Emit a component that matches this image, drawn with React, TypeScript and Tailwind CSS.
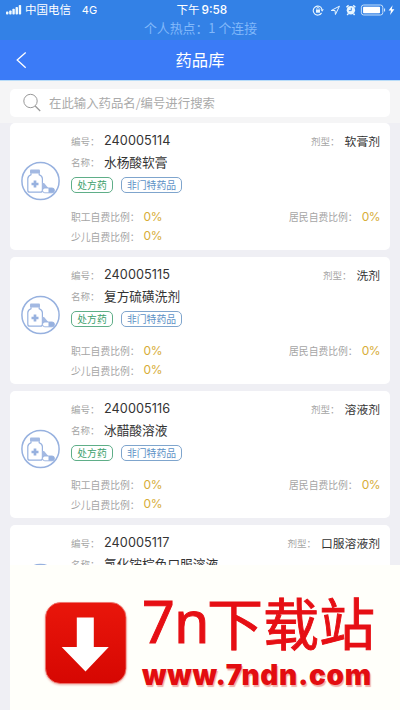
interface Drug {
  code: string;
  name: string;
  form: string;
}

const DRUGS: Drug[] = [
  { code: "240005114", name: "水杨酸软膏", form: "软膏剂" },
  { code: "240005115", name: "复方硫磺洗剂", form: "洗剂" },
  { code: "240005116", name: "冰醋酸溶液", form: "溶液剂" },
  { code: "240005117", name: "氯化铵棕色口服溶液", form: "口服溶液剂" },
];

function StatusBar() {
  return (
    <div className="h-10 bg-[#3381e6] text-white">
      <div className="flex h-5 items-center pl-[6px] pr-[5px]">
        <svg width="16" height="10" viewBox="0 0 16 10" fill="#f0faff">
          <rect x="0" y="6.5" width="2.4" height="3" rx=".8" />
          <rect x="3.2" y="5.4" width="2.4" height="4.1" rx=".8" />
          <rect x="6.4" y="3.8" width="2.4" height="5.7" rx=".8" />
          <rect x="9.6" y="2" width="2.4" height="7.5" rx=".8" />
          <rect x="12.8" y="0" width="2.4" height="9.5" rx=".8" />
        </svg>
        <span className="ml-[3px] w-[57px] text-[11.5px]">中国电信</span>
        <span className="w-[95px] font-['Inter',sans-serif] text-[11px]">4G</span>
        <span className="w-[136px] whitespace-nowrap text-[11.5px]">
          下午<span className="ml-[2px] font-['Inter',sans-serif] text-[11.8px] font-medium">9:58</span>
        </span>
        <svg width="83" height="12" viewBox="0 0 83 12" fill="none" stroke="#e8f6ff" strokeWidth="1">
          <path d="M9.6 8.900A4.500 4.500 0 1 1 9.900 5" strokeWidth="1.100" />
          <path d="M8.400 5.300h3.400L10.200 7.800z" fill="#e8f6ff" stroke="none" />
          <rect x="4" y="5.500" width="4" height="3.200" fill="#e8f6ff" stroke="none" />
          <path d="M4.800 5.500V4.600a1.200 1.200 0 0 1 2.400 0v.9" strokeWidth=".8" />
          <path d="M19.300 6.500l8.200-4.300-4 8.300-.4-4z" strokeLinejoin="round" />
          <circle cx="39" cy="6.300" r="4.200" fill="#e8f6ff" stroke="none" />
          <path d="M34.500 3.200l2.200-1.800M43.500 3.200l-2.200-1.800M36.300 9.800l-1 1.200M41.700 9.800l1 1.200" strokeWidth="1.500" />
          <path d="M39.400 3.800v2.800H37" stroke="#3381e6" strokeWidth=".9" />
          <rect x="49.500" y="1" width="21.500" height="10" rx="2.300" strokeWidth=".8" />
          <rect x="51.200" y="2.700" width="17" height="6.600" rx=".8" fill="#fff" stroke="none" />
          <path d="M72.800 4.500v3" />
          <path d="M80.800 1.200L76.800 6.600h2.400l-.9 4.400 4.300-5.800H80z" fill="#fff" stroke="none" />
        </svg>
      </div>
      <p className="pl-[1px] text-center text-[12.9px] leading-[16px] text-[#81b8fa]">
        个人热点：1 个连接
      </p>
    </div>
  );
}

function NavBar() {
  return (
    <div className="grid h-[41px] grid-cols-[60px_1fr_60px] items-center border-b border-[#b8dcf8] bg-[#3b7bf7] text-white">
      <svg className="ml-4" width="12" height="18" viewBox="0 0 12 18" fill="none" stroke="currentColor" strokeWidth="1.3">
        <path d="M9.7 1.4L1.2 9l8.5 7.7" />
      </svg>
      <h1 className="pb-[2px] text-center text-[16.3px] leading-5">药品库</h1>
    </div>
  );
}

function DrugIcon() {
  return (
    <svg width="40" height="40" viewBox="0 0 40 40" fill="none" stroke="#97b1df">
      <circle cx="20.5" cy="20" r="18.6" strokeWidth="1.5" />
      <rect x="10" y="8.5" width="10" height="4" rx="1" fill="#a3b9e2" stroke="none" />
      <path d="M11 12.2v1.6c-2 .8-3.200 2-3.200 4v11.400q0 2 2 2h10.600q2 0 2-2V17.800c0-2-1.200-3.200-3.200-4v-1.600" strokeWidth="1.200" />
      <path d="M15 19.500v7M11.500 23h7" strokeWidth="2.700" />
      <path d="M22 21.500l2.300.7 5 6-3 2.500-4.300-3z" fill="#a3b9e2" stroke="none" />
      <rect x="22.500" y="27" width="12" height="4.800" rx="2.400" fill="#fff" strokeWidth=".9" />
      <path d="M28.500 27H32a2.400 2.400 0 0 1 0 4.800h-3.500z" fill="#97b1df" stroke="none" />
    </svg>
  );
}

function Ratio({ label }: { label: string }) {
  return (
    <div className="flex items-center">
      <span className="text-[9.8px] leading-4 text-[#a5a5a5]">{label}：</span>
      <span className="ml-[4px] pb-px font-['Inter',sans-serif] text-[12px] leading-4 tracking-[-0.5px] text-[#d7ad38]">0%</span>
    </div>
  );
}

function DrugCard({ drug }: { drug: Drug }) {
  return (
    <article className="flex h-[127px] shrink-0 rounded-[5px] bg-white pl-[10px] pr-[10px] pt-[7px]">
      <div className="mt-[31px] w-[51px] shrink-0">
        <DrugIcon />
      </div>
      <div className="min-w-0 flex-1">
        <div className="flex h-[22px] items-center justify-between">
          <div className="flex items-center">
            <span className="w-[33px] text-[9.5px] text-[#a5a5a5]">编号：</span>
            <span className="font-['Inter',sans-serif] text-[12.7px] tracking-[0.05px] text-[#333]">{drug.code}</span>
          </div>
          <div className="flex items-center">
            <span className="text-[9.5px] text-[#a5a5a5]">剂型：</span>
            <span className="ml-[5px] pb-px text-[11.8px] leading-5 text-[#333]">{drug.form}</span>
          </div>
        </div>
        <div className="flex h-[21px] items-center">
          <span className="w-[33px] text-[9.5px] text-[#a5a5a5]">名称：</span>
          <span className="pb-[2px] text-[12.7px] leading-5 text-[#333]">{drug.name}</span>
        </div>
        <div className="mt-[4px] flex h-4 gap-2 text-[9.8px] leading-[14px]">
          <span className="w-[42px] rounded-[5px] border border-[#5fae88] text-center text-[#3d9f6d]">处方药</span>
          <span className="w-[61px] rounded-[5px] border border-[#7fa5cd] text-center text-[#5d91c6]">非门特药品</span>
        </div>
        <div className="mt-[14px] flex h-5 items-center justify-between">
          <Ratio label="职工自费比例" />
          <Ratio label="居民自费比例" />
        </div>
        <div className="flex h-[19px] items-center">
          <Ratio label="少儿自费比例" />
        </div>
      </div>
    </article>
  );
}

function DownloadBanner() {
  return (
    <div className="absolute bottom-0 left-[10px] right-0 flex h-[145px] bg-[#fffffa] pl-[35px] pt-[37px] text-[#e60f14]">
      <svg className="shrink-0 drop-shadow-[0_1px_1px_#e9a9a3]" width="82" height="82" viewBox="0 0 82 82">
        <defs>
          <linearGradient id="red" x1="0" y1="0" x2="0" y2="1">
            <stop offset="0" stopColor="#e9160b" />
            <stop offset="1" stopColor="#d60702" />
          </linearGradient>
        </defs>
        <rect x=".5" y=".5" width="80.5" height="81" rx="15" fill="url(#red)" stroke="#ef7770" strokeWidth=".8" />
        <path d="M31.8 15.5h17V45h15L40.500 69.500 16.700 45h15.100z" fill="#fff" />
      </svg>
      <div className="ml-[15px] whitespace-nowrap">
        <p className="-mt-[20px] flex h-[77px] text-[56px] leading-[77px] [-webkit-text-stroke:0.9px_#e60f14]">
          <span className="w-[65px] pt-px font-['Noto_Sans',sans-serif] text-[57.5px] tracking-[-0.8px]">7n</span>
          <span>下载站</span>
        </p>
        <p className="font-['Inter',sans-serif] text-[28px] font-black leading-8 tracking-[0.65px] text-[#e30d10] [text-shadow:1px_2px_1px_#f0b0aa]">
          www.7ndn.com
        </p>
      </div>
    </div>
  );
}

export default function App() {
  return (
    <div className="relative h-[710px] w-[400px] overflow-hidden bg-[#efeff4] font-['Noto_Sans_CJK_SC',sans-serif]">
      <StatusBar />
      <NavBar />
      <div className="bg-[#f5f5f6] px-[10px] pb-[6px] pt-2">
        <label className="flex h-7 items-center rounded-[5px] bg-white pl-3">
          <svg width="20" height="20" viewBox="0 0 20 20" fill="none" stroke="#999" strokeWidth="1">
            <circle cx="8.5" cy="8" r="6.7" />
            <path d="M13.2 13l5 5" strokeWidth="1.3" />
          </svg>
          <input
            type="text"
            placeholder="在此输入药品名/编号进行搜索"
            className="ml-[7px] w-[300px] text-[12.4px] outline-none placeholder:text-[#aaa]"
          />
        </label>
      </div>
      <main className="flex flex-col gap-[7px] px-[10px]">
        {DRUGS.map((drug) => (
          <DrugCard key={drug.code} drug={drug} />
        ))}
      </main>
      <DownloadBanner />
    </div>
  );
}
